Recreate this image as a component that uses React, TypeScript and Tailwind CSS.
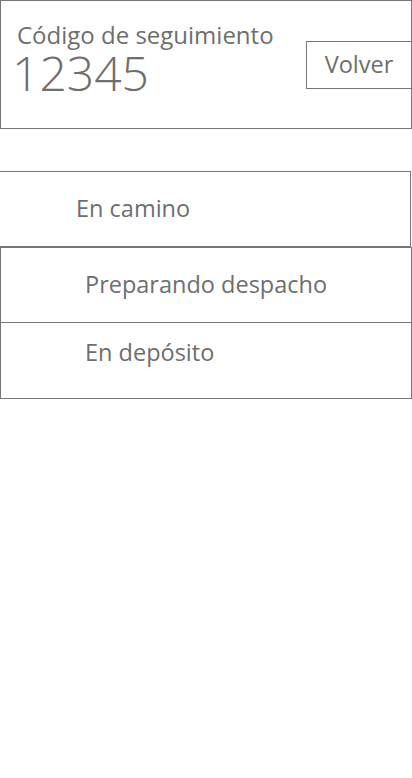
import React from "react";

export default function App() {
  const font = { fontFamily: '"Open Sans", "Noto Sans", sans-serif' };
  return (
    <div className="w-[412px] min-h-[778px] bg-white text-[#6e6e6e]" style={font}>
      <div className="h-[129px] border border-[#777] flex items-start justify-between">
        <div className="pl-[16px] pt-[20px] flex flex-col">
          <span className="text-[24px] leading-[28px]">Código de seguimiento</span>
          <span className="text-[48px] leading-[48px] font-light ml-[-5px]">12345</span>
        </div>
        <button className="mt-[40px] w-[106px] h-[48px] border border-[#777] text-[23.5px] mr-[-1px] flex items-center justify-center bg-white">
          Volver
        </button>
      </div>
      <div className="mt-[42px]">
        <div className="h-[76px] border-t border-r border-b border-[#777] w-[411px] flex items-center pl-[76px] pb-[3px] text-[23.5px] leading-[32px]">
          En camino
        </div>
        <div className="h-[76px] border border-[#777] flex items-center pl-[84px] pb-[2px] text-[23.5px] leading-[32px]">
          Preparando despacho
        </div>
        <div className="h-[76px] border border-t-0 border-[#777] pl-[84px] pt-[13px] text-[23.5px] leading-[32px]">
          En depósito
        </div>
      </div>
    </div>
  );
}
